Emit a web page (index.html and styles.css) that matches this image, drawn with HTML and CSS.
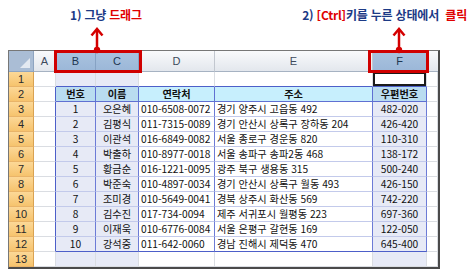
FILE: index.html
```html
<!DOCTYPE HTML>
<html lang="ko">
<head>
	<meta charset="utf-8">
	<link rel="stylesheet" href="styles.css">
</head>
<body>
	<div class="stage">
		<div class="cap">
			<span class="t1"><b class="blue">1) 그냥 </b><b class="red">드래그</b></span>
			<span class="t2"><b class="blue">2) </b><b class="red">[Ctrl]</b><b class="blue">키를 누른 상태에서&nbsp; </b><b class="red">클릭</b></span>
		</div>
		<div class="sheet">
			<div class="corner"></div><div class="hd">A</div><div class="hd sel">B</div><div class="hd sel">C</div><div class="hd">D</div><div class="hd">E</div><div class="hd sel">F</div><div class="hd last"></div>

			<div class="rh">1</div><div class="c"></div><div class="c s tt"></div><div class="c s tt"></div><div class="c tt"></div><div class="c tt"></div><div class="c tt act"></div><div class="c"></div>

			<div class="rh">2</div><div class="c tl"></div><div class="th s">번호</div><div class="th s">이름</div><div class="th">연락처</div><div class="th">주소</div><div class="th s">우편번호</div><div class="c"></div>

			<div class="rh">3</div><div class="c tl"></div><div class="td s">1</div><div class="td s">오은혜</div><div class="td l">010-6508-0072</div><div class="td l">경기 양주시 고읍동 492</div><div class="td s">482-020</div><div class="c"></div>
			<div class="rh">4</div><div class="c tl"></div><div class="td s">2</div><div class="td s">김평식</div><div class="td l">011-7315-0089</div><div class="td l">경기 안산시 상록구 장하동 204</div><div class="td s">426-420</div><div class="c"></div>
			<div class="rh">5</div><div class="c tl"></div><div class="td s">3</div><div class="td s">이관석</div><div class="td l">016-6849-0082</div><div class="td l">서울 종로구 경운동 820</div><div class="td s">110-310</div><div class="c"></div>
			<div class="rh">6</div><div class="c tl"></div><div class="td s">4</div><div class="td s">박출하</div><div class="td l">010-8977-0018</div><div class="td l">서울 송파구 송파2동 468</div><div class="td s">138-172</div><div class="c"></div>
			<div class="rh">7</div><div class="c tl"></div><div class="td s">5</div><div class="td s">황금순</div><div class="td l">016-1221-0095</div><div class="td l">광주 북구 생용동 315</div><div class="td s">500-240</div><div class="c"></div>
			<div class="rh">8</div><div class="c tl"></div><div class="td s">6</div><div class="td s">박준숙</div><div class="td l">010-4897-0034</div><div class="td l">경기 안산시 상록구 월동 493</div><div class="td s">426-150</div><div class="c"></div>
			<div class="rh">9</div><div class="c tl"></div><div class="td s">7</div><div class="td s">조미경</div><div class="td l">010-5649-0041</div><div class="td l">경북 상주시 화산동 569</div><div class="td s">742-220</div><div class="c"></div>
			<div class="rh">10</div><div class="c tl"></div><div class="td s">8</div><div class="td s">김수진</div><div class="td l">017-734-0094</div><div class="td l">제주 서귀포시 월평동 223</div><div class="td s">697-360</div><div class="c"></div>
			<div class="rh">11</div><div class="c tl"></div><div class="td s">9</div><div class="td s">이재욱</div><div class="td l">010-6776-0084</div><div class="td l">서울 은평구 갈현동 169</div><div class="td s">122-050</div><div class="c"></div>
			<div class="rh">12</div><div class="c tl"></div><div class="td s end">10</div><div class="td s end">강석중</div><div class="td l end">011-642-0060</div><div class="td l end">경남 진해시 제덕동 470</div><div class="td s end">645-400</div><div class="c"></div>

			<div class="rh">13</div><div class="c"></div><div class="c s"></div><div class="c s"></div><div class="c"></div><div class="c"></div><div class="c s"></div><div class="c"></div>
		</div>

		<div class="box box1"></div>
		<div class="box box2"></div>
		<svg class="arrows" width="474" height="60" viewBox="0 0 474 60">
			<g stroke="#d40000" stroke-width="2.5" fill="none">
				<path d="M97 29 V50"/>
				<path d="M91.5 35.5 L97 29 L102.5 35.5"/>
				<path d="M399 29 V50"/>
				<path d="M393.5 35.5 L399 29 L404.5 35.5"/>
			</g>
			<circle cx="97" cy="50" r="3.2" fill="#d40000"/>
			<circle cx="399" cy="50" r="3.2" fill="#d40000"/>
		</svg>
	</div>
</body>
</html>
```

FILE: styles.css
```css
*{margin:0;padding:0;box-sizing:border-box;}
body{background:#fff;font-family:"Noto Sans CJK KR","Noto Sans",sans-serif;}
.stage{position:relative;width:474px;height:272px;}

.cap{height:50px;display:flex;padding-top:7px;font-size:12px;line-height:16px;letter-spacing:-0.2px;}
.cap b{font-weight:bold;}
.blue{color:#1c3a86;}
.red{color:#e00000;}
.t1{margin-left:70px;}
.t2{margin-left:auto;margin-right:7px;}

.sheet{
	margin-left:8px;width:432px;
	display:grid;
	grid-template-columns:25px 22px 40px 43px 76px 158px 54px 1fr;
	grid-template-rows:21px repeat(13,15px);
	border-top:1px solid #777;border-left:1px solid #777;
	border-right:2px solid #4a4a4a;border-bottom:2px solid #4a4a4a;
	font-size:10.2px;line-height:14px;color:#111;
}
.sheet > div{border-right:1px solid #dadde2;border-bottom:1px solid #dadde2;white-space:nowrap;overflow:hidden;}

.corner{position:relative;background:#aabdd5;border-right:1px solid #8ea4c0 !important;border-bottom:1px solid #8ea4c0 !important;}
.corner:after{content:"";position:absolute;right:3px;bottom:3px;border-style:solid;border-width:0 0 10px 10px;border-color:transparent transparent #e3e9f1 transparent;}

.hd{background:linear-gradient(#f9fafc,#e3e7ed);border-right:1px solid #c2c7cf !important;border-bottom:1px solid #a6b2c2 !important;
	text-align:center;font-family:"Liberation Sans",sans-serif;font-size:11px;line-height:20px;color:#3d4a5c;}
.hd.sel{background:linear-gradient(#aac3df,#9bb7d8);border-right:1px solid #86a2c4 !important;color:#203650;}
.hd.last{border-right:0 !important;}

.rh{background:linear-gradient(#fcd897,#f6c36d);border-right:1px solid #d9a252 !important;border-bottom:1px solid #e9b469 !important;
	text-align:center;font-family:"Liberation Sans",sans-serif;font-size:11px;color:#2a2a2a;}

.c{background:#fff;}
.s{background:#e7eaf6;}
.tt{border-bottom-color:#4d5fc9 !important;}
.tl{border-right-color:#4d5fc9 !important;}
.act{background:#fff;box-shadow:inset 0 0 0 2px #1a1a1a;border-right-color:#dadde2 !important;}

.th{background:#c7effd;border-right:1px solid #5f70d2 !important;border-bottom:1px solid #5f70d2 !important;
	text-align:center;font-weight:bold;color:#111;}
.th.s{background:#b9dcf0;}
.td{background:#fff;border-right:1px solid #6c7bd6 !important;border-bottom:1px solid #c3caeb !important;text-align:center;}
.td.s{background:#e7eaf6;}
.td.l{text-align:left;padding-left:2px;}
.td.end{border-bottom-color:#4d5fc9 !important;}

.box{position:absolute;border:3px solid #d00000;}
.box1{left:54px;top:50px;width:88px;height:23px;}
.box2{left:368px;top:50px;width:61px;height:23px;}
.arrows{position:absolute;left:0;top:0;}
```
